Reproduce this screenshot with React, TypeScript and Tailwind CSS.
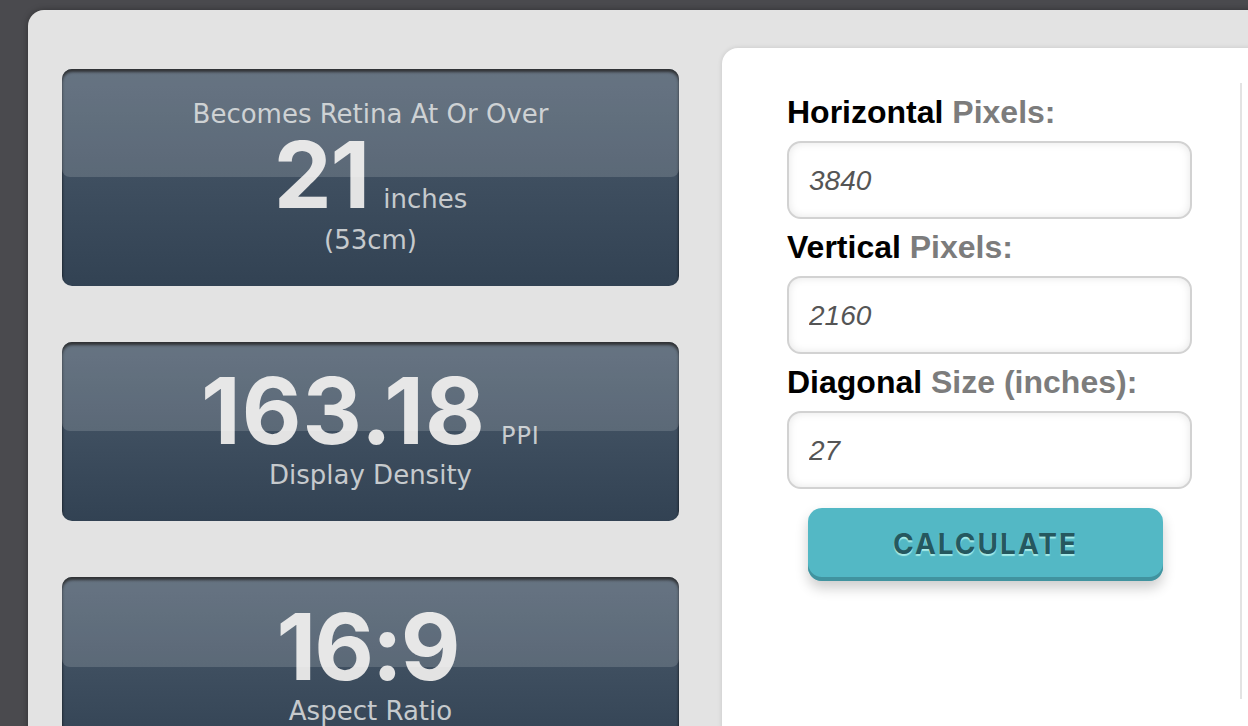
import React from "react";

const big = "font-['Inter',sans-serif] font-bold";
const small = "font-['DejaVu_Sans',sans-serif]";

function Card({ className, children }: { className: string; children: React.ReactNode }) {
  return (
    <div className={`relative w-[617px] rounded-[10px] overflow-hidden bg-gradient-to-b from-[#4c5c6d] to-[#324253] shadow-[inset_0_3px_3px_rgba(0,0,0,0.85)] text-center ${className}`}>
      {children}
      <div className="absolute left-0 right-0 top-0 h-[49.8%] rounded-b-[8px] bg-white/[0.15]" />
    </div>
  );
}

function Field({ strong, rest, value, className }: { strong: string; rest: string; value: string; className?: string }) {
  return (
    <div className={className}>
      <div className="text-[32px] leading-[32px] font-bold font-['Liberation_Sans',sans-serif] text-black">
        {strong} <span className="text-[#7c7c7c]">{rest}</span>
      </div>
      <input
        readOnly
        value={value}
        className="mt-[13px] block w-[405px] h-[78px] rounded-[14px] border-2 border-[#d2d2d2] bg-white px-5 pt-[2px] text-[28px] italic text-[#555] font-['Liberation_Sans',sans-serif] shadow-[inset_0_0_8px_rgba(0,0,0,0.1)] outline-none"
      />
    </div>
  );
}

export default function App() {
  return (
    <div className="h-[726px] w-[1248px] overflow-hidden bg-[#4a4a4e] pl-[28px] pt-[10px]">
      <div className="flex h-[800px] w-[1300px] rounded-tl-[16px] bg-[#e3e3e3] pl-[34px] pt-[38px] shadow-[0_0_6px_rgba(0,0,0,0.35)]">
        <div className="flex w-[617px] flex-col gap-[56px] pt-[21px]">
          <Card className="h-[217px] pt-[29px]">
            <div className={`${small} text-[26px] leading-[32px] text-[#c6cacd]`}>Becomes Retina At Or Over</div>
            <div className="mt-[3px] flex h-[84px] items-baseline justify-center">
              <span className={`${big} text-[92px] leading-[84px] tracking-[-1px] text-[#e3e3e3]`}>21</span>
              <span className={`${small} ml-[14px] text-[26px] text-[#c6cacd]`}>inches</span>
            </div>
            <div className={`${small} mt-[7px] text-[26px] leading-[32px] text-[#c6cacd]`}>(53cm)</div>
          </Card>
          <Card className="h-[179px] pt-[27px]">
            <div className="flex h-[84px] items-baseline justify-center">
              <span className={`${big} text-[92px] leading-[84px] tracking-[1px] text-[#e3e3e3]`}>163.18</span>
              <span className={`${small} ml-[15px] text-[24px] tracking-[1px] text-[#c6cacd]`}>PPI</span>
            </div>
            <div className={`${small} mt-[6px] text-[26px] leading-[32px] text-[#c6cacd]`}>Display Density</div>
          </Card>
          <Card className="h-[180px] pt-[28px]">
            <div className={`${big} h-[84px] pr-[6px] text-[92px] leading-[84px] tracking-[-2px] text-[#e3e3e3]`}>16:9</div>
            <div className={`${small} mt-[6px] text-[26px] leading-[32px] text-[#c6cacd]`}>Aspect Ratio</div>
          </Card>
        </div>
        <div className="ml-[43px] h-[694px] w-[600px] rounded-l-[16px] bg-white pl-[65px] pt-[48px] shadow-[0_0_5px_rgba(0,0,0,0.12)]">
          <div className="flex">
            <div className="w-[405px]">
              <Field strong="Horizontal" rest="Pixels:" value="3840" />
              <Field strong="Vertical" rest="Pixels:" value="2160" className="mt-[12px]" />
              <Field strong="Diagonal" rest="Size (inches):" value="27" className="mt-[12px]" />
              <button className="ml-[21px] mt-[19px] block h-[73px] w-[355px] rounded-[14px] bg-[#53b8c5] pb-[2px] text-center font-['Inter',sans-serif] text-[28px] font-bold tracking-[2px] text-[#25585f] [text-shadow:0_2px_1px_#a6ece9] shadow-[inset_0_-4px_0_#41939f,0_7px_13px_rgba(0,0,0,0.2)]">
                CALCULATE
              </button>
            </div>
            <div className="ml-[48px] mt-[-13px] h-[616px] w-[2px] bg-[#e3e3e3]" />
          </div>
        </div>
      </div>
    </div>
  );
}
